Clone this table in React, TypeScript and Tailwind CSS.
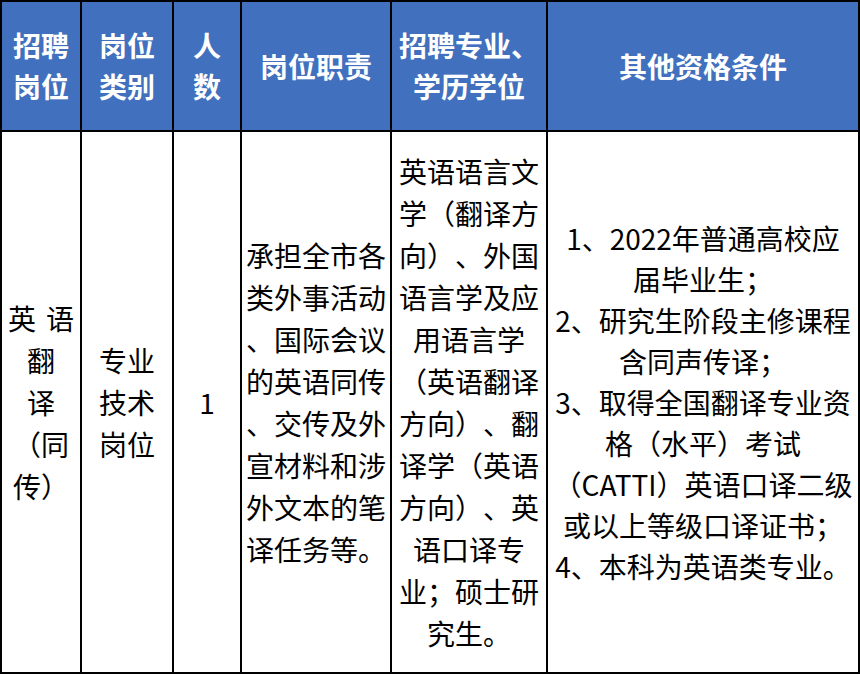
const HEADERS: string[][] = [
  ["招聘", "岗位"],
  ["岗位", "类别"],
  ["人", "数"],
  ["岗位职责"],
  ["招聘专业、", "学历学位"],
  ["其他资格条件"],
];

const DUTIES = [
  "承担全市各",
  "类外事活动",
  "、国际会议",
  "的英语同传",
  "、交传及外",
  "宣材料和涉",
  "外文本的笔",
  "译任务等。",
];

const MAJORS = [
  "英语语言文",
  "学（翻译方",
  "向）、外国",
  "语言学及应",
  "用语言学",
  "（英语翻译",
  "方向）、翻",
  "译学（英语",
  "方向）、英",
  "语口译专",
  "业；硕士研",
  "究生。",
];

const OTHERS = [
  "1、2022年普通高校应",
  "届毕业生；",
  "2、研究生阶段主修课程",
  "含同声传译；",
  "3、取得全国翻译专业资",
  "格（水平）考试",
  "（CATTI）英语口译二级",
  "或以上等级口译证书；",
  "4、本科为英语类专业。",
];

function Lines({ lines, className = "" }: { lines: string[]; className?: string }) {
  return (
    <div className={"flex flex-col items-center whitespace-nowrap " + className}>
      {lines.map((l, i) => (
        <div key={i}>{l}</div>
      ))}
    </div>
  );
}

export default function App() {
  return (
    <div className="w-[860px] h-[674px] bg-white font-['Noto_Sans_CJK_SC',sans-serif] [text-spacing-trim:space-all]">
      <div className="grid grid-cols-[78px_90px_66px_148px_154px_310px] grid-rows-[128px_540px] gap-[2px] bg-black p-[2px]">
        {/* Header */}
        {HEADERS.map((h, i) => (
          <div
            key={i}
            className="bg-[#4170be] flex items-center justify-center text-white font-bold text-[28px] leading-[41px]"
          >
            <Lines lines={h} />
          </div>
        ))}

        {/* Body */}
        <div className="bg-white flex items-center justify-center text-black text-[28px] leading-[42px]">
          <div className="flex flex-col items-center whitespace-nowrap">
            <div>
              <span>英</span>
              <span className="ml-[10px]">语</span>
            </div>
            <div>翻</div>
            <div>译</div>
            <div>（同</div>
            <div>传）</div>
          </div>
        </div>
        <div className="bg-white flex items-center justify-center text-black text-[28px] leading-[42px]">
          <Lines lines={["专业", "技术", "岗位"]} />
        </div>
        <div className="bg-white flex items-center justify-center text-black text-[28px] leading-[42px]">
          1
        </div>
        <div className="bg-white flex items-center justify-center text-black text-[28px] leading-[42px]">
          <Lines lines={DUTIES} />
        </div>
        <div className="bg-white flex items-center justify-center text-black text-[28px] leading-[42px]">
          <Lines lines={MAJORS} />
        </div>
        <div className="bg-white flex items-center justify-center text-black text-[28px] leading-[41px]">
          <Lines lines={OTHERS} />
        </div>
      </div>
    </div>
  );
}
